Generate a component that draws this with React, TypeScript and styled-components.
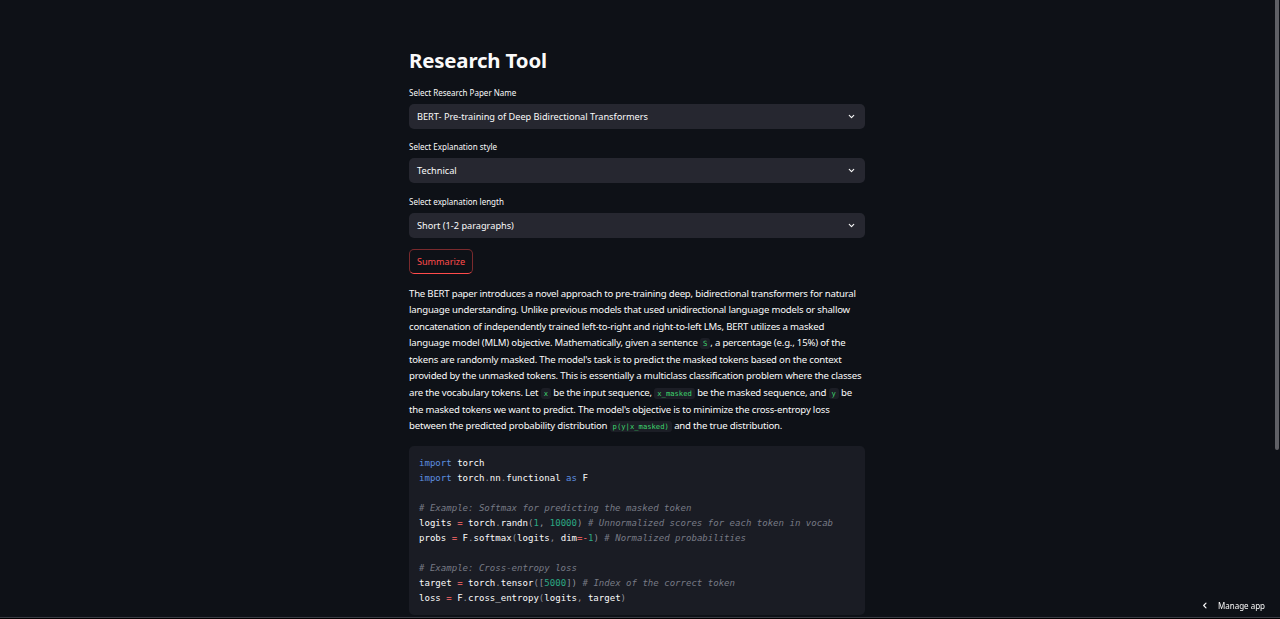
import React from "react";
import styled, { createGlobalStyle } from "styled-components";

const GlobalStyle = createGlobalStyle`
  html, body { margin: 0; padding: 0; background: #0e1117; overflow: hidden; }
  body { font-family: "Noto Sans", "Open Sans", sans-serif; color: #fafafa; }
`;

const Page = styled.div`
  min-height: 619px;
  display: flex;
  justify-content: center;
  background: #0e1117;
`;

const Main = styled.main`
  width: 456px;
  padding-top: 40px;
  margin-left: -6px;
  display: flex;
  flex-direction: column;
  gap: 11.5px;
`;

const Title = styled.h1`
  margin: 0 0 -6px 0;
  font-size: 20.4px;
  line-height: 40px;
  font-weight: 700;
  color: #fafafa;
  letter-spacing: -0.15px;
`;

const Field = styled.div`
  display: flex;
  flex-direction: column;
  gap: 4px;
`;

const Label = styled.label`
  font-size: 8px;
  line-height: 14px;
  color: #fafafa;
`;

const SelectBox = styled.div`
  height: 25px;
  background: #262730;
  border-radius: 5px;
  display: flex;
  align-items: center;
  justify-content: space-between;
  padding: 0 9px 0 8px;
  font-size: 9.2px;
  color: #fafafa;
`;

const Button = styled.button`
  align-self: flex-start;
  height: 25px;
  padding: 0 7px;
  background: transparent;
  border: 1px solid rgba(255, 75, 75, 0.45);
  border-bottom: 1px solid #ff4b4b;
  border-radius: 5px;
  color: #ff4b4b;
  font-family: "Noto Sans", sans-serif;
  font-size: 9.1px;
`;

const Para = styled.p`
  margin: 0;
  font-size: 9.6px;
  line-height: 16.6px;
  color: #fafafa;
  letter-spacing: -0.2px;
`;

const InlineCode = styled.code`
  font-family: "DejaVu Sans Mono", "Liberation Mono", monospace;
  font-size: 7.2px;
  line-height: 1;
  letter-spacing: 0;
  color: #3dd56d;
  background: #1c1e26;
  border-radius: 3px;
  padding: 1px 3px;
`;

const CodeBlock = styled.pre`
  margin: 0;
  background: #1a1c24;
  border-radius: 5px;
  padding: 9.5px 10px;
  font-family: "DejaVu Sans Mono", "Liberation Mono", monospace;
  font-size: 9.05px;
  line-height: 15px;
  color: #fafafa;
`;

type TokKind = "kw" | "op" | "num" | "com" | "pun" | "txt";
const colors: Record<TokKind, string> = {
  kw: "#5d8fe0",
  op: "#ff6b6b",
  num: "#2ba883",
  com: "#777a84",
  pun: "#8e9099",
  txt: "#fafafa",
};

const Tok = styled.span<{ $k: TokKind }>`
  color: ${(p) => colors[p.$k]};
  font-style: ${(p) => (p.$k === "com" ? "italic" : "normal")};
`;

const ManageApp = styled.div`
  position: fixed;
  right: 15px;
  bottom: 8px;
  display: flex;
  align-items: center;
  gap: 9px;
  font-size: 8px;
  color: #fafafa;
`;

const ScrollThumb = styled.div`
  position: fixed;
  right: 1px;
  top: 0;
  width: 4px;
  height: 450px;
  background: #5f6066;
  border-radius: 0 0 2px 2px;
`;

const WindowEdge = styled.div`
  position: fixed;
  left: 0;
  right: 0;
  bottom: 0;
  height: 2px;
  border-top: 1px solid #3a3c44;
  background: #000;
  box-sizing: border-box;
`;

const Chevron = () => (
  <svg width="9" height="9" viewBox="0 0 24 24" fill="none" stroke="#fafafa" strokeWidth="3" strokeLinecap="round" strokeLinejoin="round">
    <path d="M6 9l6 6 6-6" />
  </svg>
);

const LeftChevron = () => (
  <svg width="8" height="9" viewBox="0 0 24 24" fill="none" stroke="#fafafa" strokeWidth="3.5" strokeLinecap="round" strokeLinejoin="round">
    <path d="M15 5l-7 7 7 7" />
  </svg>
);

type Line = [TokKind, string][];
const code: Line[] = [
  [["kw", "import"], ["txt", " torch"]],
  [["kw", "import"], ["txt", " torch"], ["pun", "."], ["txt", "nn"], ["pun", "."], ["txt", "functional "], ["kw", "as"], ["txt", " F"]],
  [],
  [["com", "# Example: Softmax for predicting the masked token"]],
  [["txt", "logits "], ["op", "="], ["txt", " torch"], ["pun", "."], ["txt", "randn"], ["pun", "("], ["num", "1"], ["pun", ", "], ["num", "10000"], ["pun", ")"], ["txt", " "], ["com", "# Unnormalized scores for each token in vocab"]],
  [["txt", "probs "], ["op", "="], ["txt", " F"], ["pun", "."], ["txt", "softmax"], ["pun", "("], ["txt", "logits"], ["pun", ", "], ["txt", "dim"], ["op", "=-"], ["num", "1"], ["pun", ")"], ["txt", " "], ["com", "# Normalized probabilities"]],
  [],
  [["com", "# Example: Cross-entropy loss"]],
  [["txt", "target "], ["op", "="], ["txt", " torch"], ["pun", "."], ["txt", "tensor"], ["pun", "(["], ["num", "5000"], ["pun", "])"], ["txt", " "], ["com", "# Index of the correct token"]],
  [["txt", "loss "], ["op", "="], ["txt", " F"], ["pun", "."], ["txt", "cross_entropy"], ["pun", "("], ["txt", "logits"], ["pun", ", "], ["txt", "target"], ["pun", ")"]],
];

const fields = [
  { label: "Select Research Paper Name", value: "BERT- Pre-training of Deep Bidirectional Transformers" },
  { label: "Select Explanation style", value: "Technical" },
  { label: "Select explanation length", value: "Short (1-2 paragraphs)" },
];

export default function App() {
  return (
    <>
      <GlobalStyle />
      <Page>
        <Main>
          <Title>Research Tool</Title>
          {fields.map((f) => (
            <Field key={f.label}>
              <Label>{f.label}</Label>
              <SelectBox>
                <span>{f.value}</span>
                <Chevron />
              </SelectBox>
            </Field>
          ))}
          <Button>Summarize</Button>
          <Para>
            The BERT paper introduces a novel approach to pre-training deep, bidirectional transformers for natural
            language understanding. Unlike previous models that used unidirectional language models or shallow
            concatenation of independently trained left-to-right and right-to-left LMs, BERT utilizes a masked
            language model (MLM) objective. Mathematically, given a sentence <InlineCode>S</InlineCode>, a percentage (e.g., 15%) of the
            tokens are randomly masked. The model's task is to predict the masked tokens based on the context
            provided by the unmasked tokens. This is essentially a multiclass classification problem where the classes
            are the vocabulary tokens. Let <InlineCode>x</InlineCode> be the input sequence, <InlineCode>x_masked</InlineCode> be the masked sequence, and <InlineCode>y</InlineCode> be
            the masked tokens we want to predict. The model's objective is to minimize the cross-entropy loss
            between the predicted probability distribution <InlineCode>p(y|x_masked)</InlineCode> and the true distribution.
          </Para>
          <CodeBlock>
            {code.map((line, i) => (
              <div key={i}>
                {line.length === 0 ? "\u00a0" : line.map(([k, t], j) => (
                  <Tok key={j} $k={k}>{t}</Tok>
                ))}
              </div>
            ))}
          </CodeBlock>
        </Main>
      </Page>
      <ManageApp>
        <LeftChevron />
        <span>Manage app</span>
      </ManageApp>
      <ScrollThumb />
      <WindowEdge />
    </>
  );
}
